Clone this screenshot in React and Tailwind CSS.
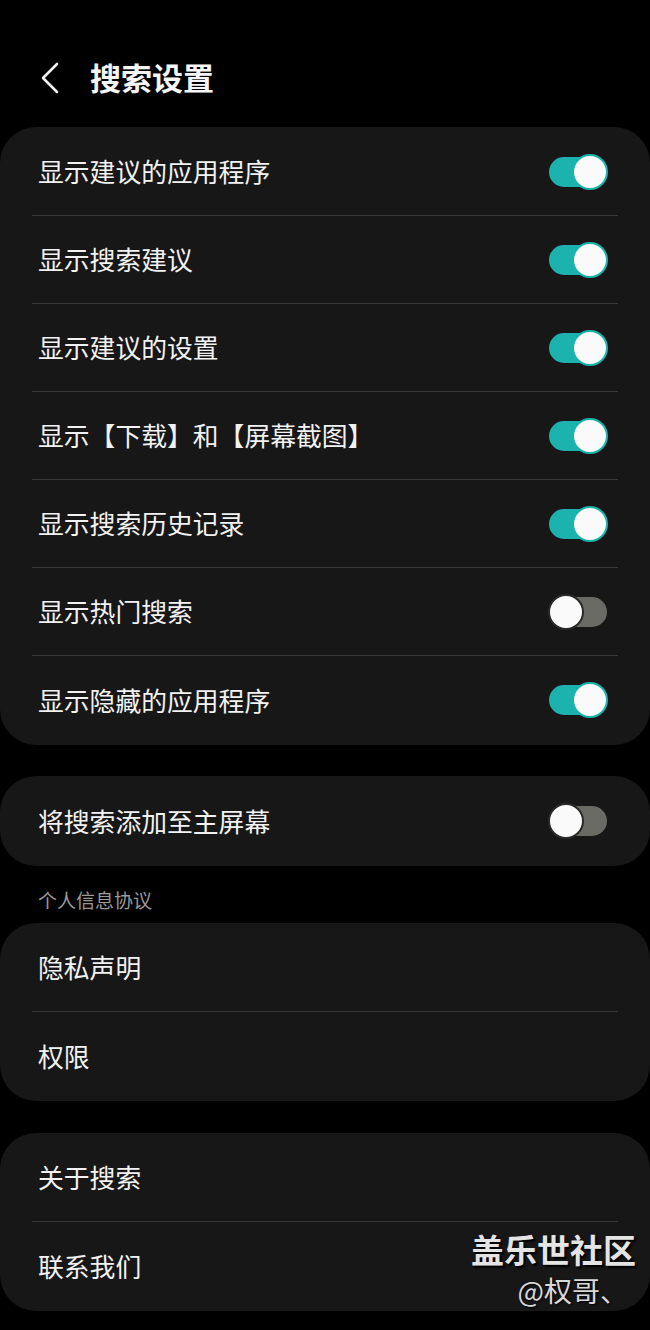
import React, { useState } from "react";

const font = { fontFamily: '"Noto Sans CJK SC", "Noto Sans", sans-serif' };

const Toggle = ({ on, onClick }) => (
  <button
    onClick={onClick}
    className={`relative w-[58px] h-[30px] rounded-full flex items-center ${on ? "bg-[#1cb3ae]" : "bg-[#6a6a65]"}`}
  >
    <span
      className={`absolute top-[-3px] w-[36px] h-[36px] rounded-full bg-[#fafafa] border-[2px] ${
        on ? "right-[-1px] border-[#1cb3ae]" : "left-[-1px] border-[#2a2a2a]"
      }`}
    />
  </button>
);

const Row = ({ label, toggle, on, onClick, last }) => (
  <div
    className={`mx-[32px] h-[88px] flex items-center justify-between pl-[6px] pr-[11px] ${
      last ? "" : "border-b border-[#363636]"
    }`}
  >
    <span className="text-[25.8px] text-[#f2f2f2]">{label}</span>
    {toggle && <Toggle on={on} onClick={onClick} />}
  </div>
);

const Card = ({ children, className = "" }) => (
  <div className={`bg-[#171717] rounded-[36px] py-px ${className}`}>{children}</div>
);

export default function App() {
  const [toggles, setToggles] = useState({
    apps: true,
    suggest: true,
    settings: true,
    downloads: true,
    history: true,
    hot: false,
    hidden: true,
    home: false
  });
  const flip = (k) => setToggles((t) => ({ ...t, [k]: !t[k] }));

  const main = [
    ["apps", "显示建议的应用程序"],
    ["suggest", "显示搜索建议"],
    ["settings", "显示建议的设置"],
    ["downloads", "显示【下载】和【屏幕截图】"],
    ["history", "显示搜索历史记录"],
    ["hot", "显示热门搜索"],
    ["hidden", "显示隐藏的应用程序"]
  ];

  return (
    <div className="w-[650px] h-[1330px] bg-black overflow-hidden relative" style={font}>
      {/* Header */}
      <div className="h-[127px] flex items-center pt-[28px] pl-[40px]">
        <svg width="20" height="32" viewBox="0 0 20 32" fill="none">
          <path d="M17 2 L3 16 L17 30" stroke="#f2f2f2" strokeWidth="2.6" strokeLinecap="round" strokeLinejoin="round" />
        </svg>
        <h1 className="ml-[30px] text-[31px] font-bold text-[#f5f5f5]">搜索设置</h1>
      </div>

      <Card>
        {main.map(([k, label], i) => (
          <Row
            key={k}
            label={label}
            toggle
            on={toggles[k]}
            onClick={() => flip(k)}
            last={i === main.length - 1}
          />
        ))}
      </Card>

      <Card className="mt-[31px]">
        <Row label="将搜索添加至主屏幕" toggle on={toggles.home} onClick={() => flip("home")} last />
      </Card>

      <div className="h-[57px] flex items-center pl-[38px] pt-[12px]">
        <span className="text-[19px] text-[#9a9a9a]">个人信息协议</span>
      </div>

      <Card>
        <Row label="隐私声明" />
        <Row label="权限" last />
      </Card>

      <Card className="mt-[32px]">
        <Row label="关于搜索" />
        <Row label="联系我们" last />
      </Card>

      {/* Watermark */}
      <div className="absolute right-[14px] top-[1226px] flex flex-col items-end">
        <span className="text-[33px] font-bold text-[#e4e4e4] leading-[46px] [text-shadow:2px_2px_2px_#000]">
          盖乐世社区
        </span>
        <span className="text-[28px] text-[#d8d8d8] leading-[36px] pr-[8px] [text-shadow:1px_1px_2px_#000]">
          @权哥、
        </span>
      </div>
    </div>
  );
}
